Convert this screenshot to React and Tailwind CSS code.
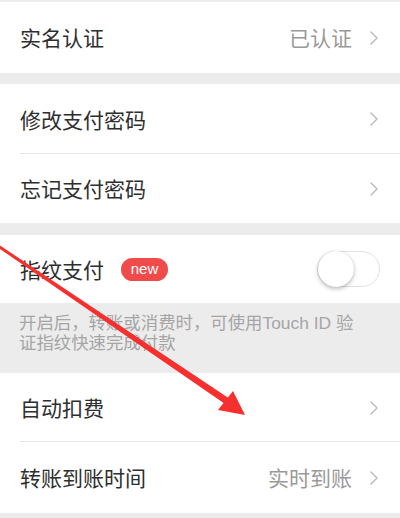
import React from "react";

const font = { fontFamily: '"Noto Sans CJK SC", "Noto Sans", sans-serif' };

function Chevron() {
  return (
    <svg width="10" height="16" viewBox="0 0 10 16" className="shrink-0">
      <polyline points="2,2 8,8 2,14" fill="none" stroke="#b8b8b8" strokeWidth="1.4" strokeLinecap="round" strokeLinejoin="round" />
    </svg>
  );
}

function Row({ label, value, h, divider }) {
  return (
    <div className={`relative flex items-center bg-white pl-5 pr-[21px] ${h}`}>
      <span className="flex-1 text-[21px] leading-none text-[#2e2e2e]">{label}</span>
      {value && <span className="mr-[17px] text-[21px] leading-none text-[#999]">{value}</span>}
      <Chevron />
      {divider && <div className="absolute bottom-0 left-5 right-0 h-px bg-[#e6e6e6]" />}
    </div>
  );
}

export default function App() {
  return (
    <div className="relative h-[518px] w-[400px] overflow-hidden bg-[#ececec]" style={font}>
      <div className="h-[2px]" />
      <Row label="实名认证" value="已认证" h="h-[71px]" />
      <div className="h-[11px]" />
      <Row label="修改支付密码" h="h-[70px]" divider />
      <Row label="忘记支付密码" h="h-[69px]" />
      <div className="h-[12px]" />
      <div className="flex h-[68px] items-center bg-white pl-5 pr-[20px]">
        <span className="text-[21px] leading-none text-[#2e2e2e]">指纹支付</span>
        <span className="ml-[17px] flex h-[23px] w-[47px] items-center justify-center rounded-full bg-[#f04a4a] pb-[2px] text-[15px] leading-none text-white" style={{ fontFamily: '"Liberation Sans", "Noto Sans", sans-serif' }}>new</span>
        <div className="flex-1" />
        <div className="relative h-[36px] w-[63px] rounded-full border border-[#e2e2e2] bg-white">
          <div className="absolute left-0 top-[-1px] h-[36px] w-[36px] rounded-full bg-white shadow-[0_2px_4px_rgba(0,0,0,0.25),0_0_1px_rgba(0,0,0,0.2)]" />
        </div>
      </div>
      <div
        className="h-[70px] px-[19px] pt-[10px] text-[17.4px] leading-[20px] text-[#a5a5a5]"
        style={{ fontFamily: '"Liberation Sans", "Noto Sans CJK SC", sans-serif' }}
      >
        开启后，转账或消费时，可使用Touch ID 验<br />证指纹快速完成付款
      </div>
      <Row label="自动扣费" h="h-[69px]" divider />
      <Row label="转账到账时间" value="实时到账" h="h-[71px]" />

      <svg className="pointer-events-none absolute left-0 top-0" width="400" height="518" viewBox="0 0 400 518">
        <polygon points="0,245.5 0,249 228,406 231.5,400" fill="#f5302e" />
        <polygon points="245,415 218,410 233,391" fill="#f5302e" />
      </svg>
    </div>
  );
}
